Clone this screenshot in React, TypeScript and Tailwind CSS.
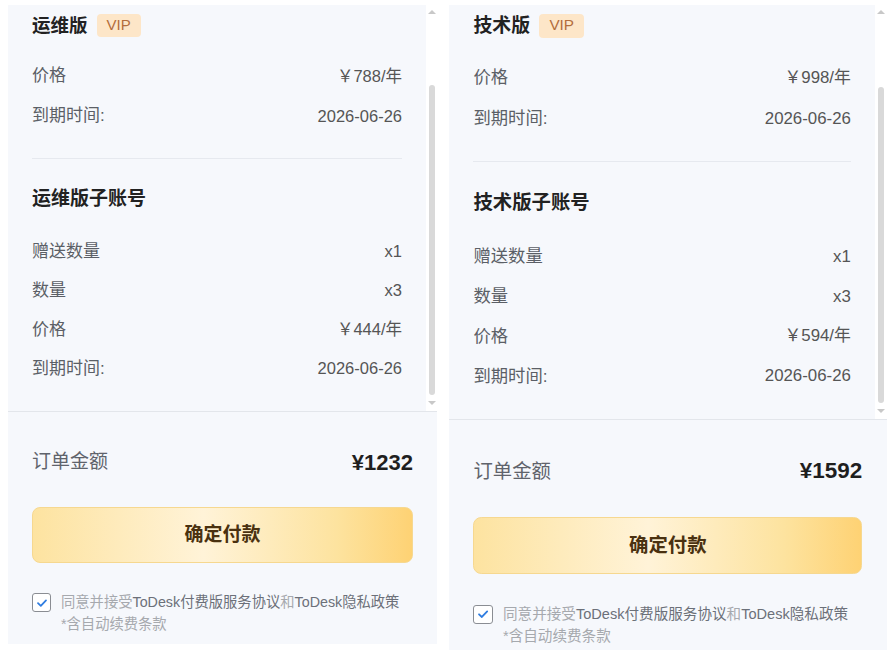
import React from 'react'

type Plan = {
  name: string
  price: string
  subPrice: string
  total: string
  zoom?: boolean
}

const plans: Plan[] = [
  { name: '运维版', price: '￥788/年', subPrice: '￥444/年', total: '¥1232' },
  { name: '技术版', price: '￥998/年', subPrice: '￥594/年', total: '¥1592', zoom: true },
]

function Row({ label, value, tall }: { label: string; value: string; tall?: boolean }) {
  return (
    <div className={`flex items-center justify-between ${tall ? 'h-[40px]' : 'h-[39px]'}`}>
      <span className="text-[17px] text-[#5b5f66]">{label}</span>
      <span className="text-[16.5px] text-[#555]">{value}</span>
    </div>
  )
}

function Scrollbar() {
  return (
    <div className="w-[11px] bg-white flex flex-col items-center">
      {/* up arrow */}
      <div className="mt-[5px] w-0 h-0 border-l-[4px] border-r-[4px] border-b-[4px] border-l-transparent border-r-transparent border-b-[#c8c8c8]" />
      <div className="mt-[71px] w-[6px] h-[310px] rounded-full bg-[#d9d9d9]" />
      <div className="mt-[6px] w-0 h-0 border-l-[4px] border-r-[4px] border-t-[4px] border-l-transparent border-r-transparent border-t-[#c8c8c8]" />
    </div>
  )
}

function Panel({ plan }: { plan: Plan }) {
  return (
    <div className={`w-[429px] flex flex-col ${plan.zoom ? '[zoom:1.02]' : ''}`}>
      {/* scroll area */}
      <div className="flex h-[406px] overflow-hidden">
        <div className="flex-1 bg-[#f6f8fc] px-6 pt-[9px]">
          <div className="flex items-center h-[23px]">
            <span className="text-[18.5px] font-bold text-[#222]">{plan.name}</span>
            <span className="ml-[9px] h-[23px] px-[10px] flex items-center rounded-[4px] bg-[#fde6c8] text-[15px] text-[#b36d3c]">
              VIP
            </span>
          </div>

          <div className="mt-[19px]">
            <Row label="价格" value={plan.price} tall />
            <Row label="到期时间:" value="2026-06-26" tall />
          </div>

          <div className="mt-[22px] h-px bg-[#e6e9ef]" />

          <div className="mt-[20px] h-[40px] flex items-center">
            <span className="text-[19px] font-bold text-[#222]">{plan.name}子账号</span>
          </div>

          <div className="mt-[13px]">
            <Row label="赠送数量" value="x1" />
            <Row label="数量" value="x3" />
            <Row label="价格" value={plan.subPrice} />
            <Row label="到期时间:" value="2026-06-26" />
          </div>
        </div>
        <Scrollbar />
      </div>

      {/* footer */}
      <div className="bg-[#f6f8fc] border-t border-[#e3e6eb] px-6 pt-[35px] pb-[9px]">
        <div className="h-[30px] flex items-center justify-between">
          <span className="text-[19px] text-[#5f636b]">订单金额</span>
          <span className="text-[22px] font-bold text-[#1f1f1f]">{plan.total}</span>
        </div>

        <button className="mt-[30px] w-full h-[56px] rounded-[8px] border border-[#f6d890] bg-[linear-gradient(90deg,#fde3a0_0%,#fff3d8_45%,#fde39f_80%,#fed274_100%)] text-[19px] font-bold text-[#4a3110]">
          确定付款
        </button>

        <div className="mt-[28px] flex gap-[10px]">
          <div className="mt-[2px] w-[19px] h-[19px] shrink-0 rounded-[3px] border-[1.5px] border-[#8a8d93] bg-white flex items-center justify-center">
            <svg width="12" height="12" viewBox="0 0 12 12" fill="none">
              <path d="M2 6.2 L4.8 8.8 L10 3.4" stroke="#2f7de1" strokeWidth="1.8" strokeLinecap="round" strokeLinejoin="round" />
            </svg>
          </div>
          <div className="text-[14.3px] leading-[22px] text-[#a6a9ae]">
            <div>
              同意并接受<span className="text-[#6c7079]">ToDesk付费版服务协议</span>和
              <span className="text-[#6c7079]">ToDesk隐私政策</span>
            </div>
            <div>*含自动续费条款</div>
          </div>
        </div>
      </div>
    </div>
  )
}

export default function App() {
  return (
    <div
      className="w-[893px] h-[650px] overflow-hidden bg-white flex items-start gap-[12px] pl-[8px] pt-[5px]"
      style={{ fontFamily: '"Liberation Sans", "Noto Sans CJK SC", sans-serif' }}
    >
      {plans.map((p) => (
        <Panel key={p.name} plan={p} />
      ))}
    </div>
  )
}
